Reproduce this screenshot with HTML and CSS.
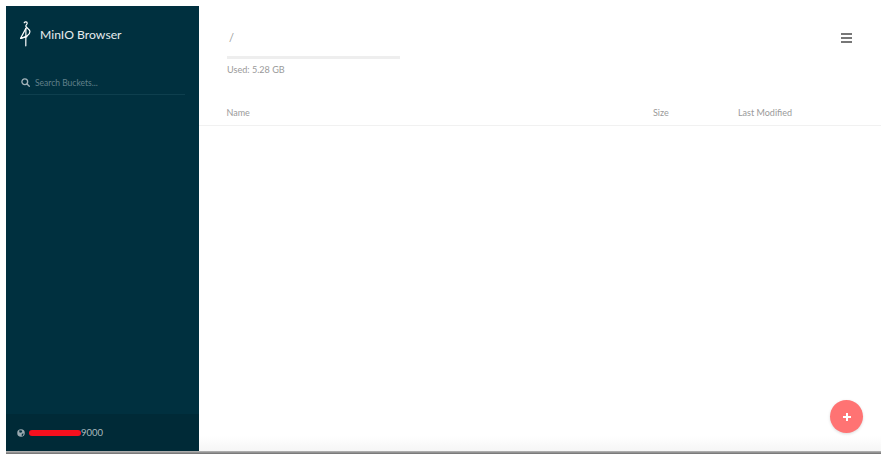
FILE: index.html
```html
<!DOCTYPE html>
<html lang="en">
<head>
<meta charset="utf-8">
<title>MinIO Browser</title>
<link rel="stylesheet" href="styles.css">
</head>
<body>
<div class="window">
  <aside class="sidebar">
    <div class="brand">
      <svg class="logo" viewBox="0 0 14 26" width="14" height="26" fill="none" stroke="#fff" stroke-width="1.200" stroke-linecap="round" stroke-linejoin="round">
        <path d="M4.200 1.800C5 .4 7.200.6 7.200 2.200 7.200 3.400 5.600 3.800 5.800 5.200 6 6.600 9.800 7.800 9.900 10.600 10 13.200 6 15.800 .6 17.300L5.900 7.400"/>
        <path d="M.6 17.300L7 15.600"/>
        <path d="M5.900 7.400L5.800 24.800"/>
      </svg>
      <span class="brand-name">MinIO Browser</span>
    </div>
    <div class="search">
      <svg class="search-icon" viewBox="0 0 10 10" width="9" height="9" fill="none" stroke="#a3b3ba" stroke-width="1.500" stroke-linecap="round">
        <circle cx="4.200" cy="4.200" r="3.200"/>
        <path d="M6.700 6.700L9.200 9.200"/>
      </svg>
      <span class="search-text">Search Buckets...</span>
    </div>
    <div class="host">
      <svg class="globe" viewBox="0 0 10 10" width="8" height="8">
        <circle cx="5" cy="5" r="4.700" fill="#9aa9b0"/>
        <path d="M3 1.500l3 .4 .6 1.800-2 1-1.800-.6zM6 6l2.500-.5-1.300 2.800-1.300.4z" fill="#00303f"/>
      </svg>
      <span class="host-name"><span class="redaction"></span><span class="port">9000</span></span>
    </div>
  </aside>
  <main class="content">
    <header class="top">
      <div class="path-block">
        <div class="path">/</div>
        <div class="usage-bar"></div>
        <div class="used">Used: 5.28 GB</div>
      </div>
      <div class="menu" aria-label="Menu"><i></i><i></i><i></i></div>
    </header>
    <div class="columns">
      <span class="col-name">Name</span>
      <span class="col-size">Size</span>
      <span class="col-date">Last Modified</span>
    </div>
    <div class="list"></div>
    <button class="fab" aria-label="Add"><span class="plus"></span></button>
  </main>
</div>
<div class="bottom-edge"></div>
</body>
</html>
```
FILE: styles.css
```css
* { box-sizing: border-box; }
html, body { margin: 0; height: 457px; overflow: hidden; background: #fff; }
body { font-family: Lato, "Liberation Sans", sans-serif; padding: 6px 6px 0; }
.window { display: flex; height: 445px; width: 875px; }
.sidebar {
  width: 193px;
  flex: none;
  background: #00303f;
  display: flex;
  flex-direction: column;
  color: #fff;
}
.brand { display: flex; align-items: center; padding: 15px 0 0 14px; height: 41px; }
.logo { flex: none; }
.brand-name { margin-left: 6px; font-size: 12.200px; color: #e6ecee; }
.search {
  margin: 25px 14px 0 14px;
  height: 23px;
  border-bottom: 1px solid #0e3f4e;
  display: flex;
  align-items: center;
  padding-bottom: 1px;
}
.search-icon { margin-left: 1px; flex: none; }
.search-text { margin-left: 5px; font-size: 8.500px; color: #60808b; }
.host {
  margin-top: auto;
  height: 37px;
  background: #002a37;
  display: flex;
  align-items: center;
  padding: 0 0 0 11px;
}
.globe { flex: none; }
.host-name { display: flex; align-items: center; margin-left: 4px; font-size: 9.500px; color: #a9b9be; }
.redaction { display: block; width: 52px; height: 6px; background: #f5101e; border-radius: 3px; }
.content { flex: 1; position: relative; background: linear-gradient(#fff 430px, #f6f6f6 445px); min-width: 0; }
.top { display: flex; justify-content: space-between; padding: 0 29px 0 28px; height: 90px; }
.path { font-size: 11px; color: #999; margin-top: 25px; height: 14px; line-height: 14px; padding-left: 2px; }
.usage-bar { width: 173px; height: 3px; background: #eeeeee; margin-top: 11px; }
.used { font-size: 9.100px; color: #9a9a9a; margin-top: 5px; line-height: 12px; }
.menu { display: flex; flex-direction: column; gap: 2px; margin-top: 27px; width: 11px; }
.menu i { display: block; height: 2px; background: #777; }
.columns {
  position: relative;
  display: grid;
  grid-template-columns: 426.500px 85px 1fr;
  height: 30px;
  padding: 10px 0 0 27.500px;
  border-bottom: 1px solid #f1f1f1;
  font-size: 9px;
  color: #9a9a9a;
  line-height: 14px;
}
.list { flex: 1; }
.fab {
  position: absolute;
  right: 18px;
  bottom: 18px;
  width: 33px;
  height: 33px;
  border: 0;
  padding: 0;
  border-radius: 50%;
  background: #ff7373;
  box-shadow: 0 1px 3px rgba(0,0,0,.15);
  display: flex;
  align-items: center;
  justify-content: center;
}
.plus { display: block; width: 8px; height: 8px; background:
  linear-gradient(#fff,#fff) center/8px 2px no-repeat,
  linear-gradient(#fff,#fff) center/2px 8px no-repeat; }
.bottom-edge {
  height: 3px;
  background: linear-gradient(#b9b9b9, #6d6d6d);
}
```
